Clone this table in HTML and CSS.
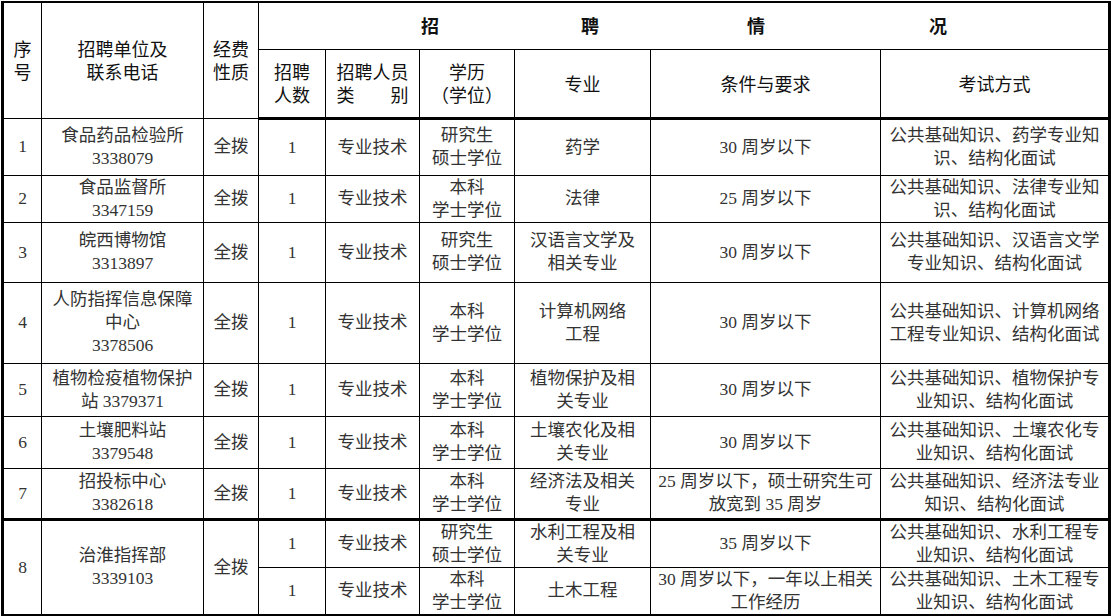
FILE: index.html
```html
<!DOCTYPE html>
<html lang="zh-CN">
<head>
<meta charset="utf-8">
<title>招聘情况</title>
<link rel="stylesheet" href="styles.css">
</head>
<body>
<table class="grid">
  <colgroup>
    <col class="c1"><col class="c2"><col class="c3"><col class="c4"><col class="c5"><col class="c6"><col class="c7"><col class="c8"><col class="c9">
  </colgroup>
  <thead>
    <tr class="hA">
      <th rowspan="2"><span class="ln">序</span><span class="ln">号</span></th>
      <th rowspan="2"><span class="ln">招聘单位及</span><span class="ln">联系电话</span></th>
      <th rowspan="2"><span class="ln">经费</span><span class="ln">性质</span></th>
      <th colspan="6" class="title"><div class="spread"><span>招</span><span>聘</span><span>情</span><span>况</span></div></th>
    </tr>
    <tr class="hB">
      <th><span class="ln">招聘</span><span class="ln">人数</span></th>
      <th><span class="ln">招聘人员</span><span class="ln">类&emsp;&emsp;别</span></th>
      <th><span class="ln">学历</span><span class="ln">（学位）</span></th>
      <th>专业</th>
      <th>条件与要求</th>
      <th>考试方式</th>
    </tr>
  </thead>
  <tbody>
    <tr class="r1">
      <td>1</td><td>食品药品检验所<br>3338079</td><td>全拨</td><td>1</td><td>专业技术</td><td>研究生<br>硕士学位</td><td>药学</td><td>30 周岁以下</td><td>公共基础知识、药学专业知<br>识、结构化面试</td>
    </tr>
    <tr class="r2">
      <td>2</td><td>食品监督所<br>3347159</td><td>全拨</td><td>1</td><td>专业技术</td><td>本科<br>学士学位</td><td>法律</td><td>25 周岁以下</td><td>公共基础知识、法律专业知<br>识、结构化面试</td>
    </tr>
    <tr class="r3">
      <td>3</td><td>皖西博物馆<br>3313897</td><td>全拨</td><td>1</td><td>专业技术</td><td>研究生<br>硕士学位</td><td>汉语言文学及<br>相关专业</td><td>30 周岁以下</td><td>公共基础知识、汉语言文学<br>专业知识、结构化面试</td>
    </tr>
    <tr class="r4">
      <td>4</td><td>人防指挥信息保障<br>中心<br>3378506</td><td>全拨</td><td>1</td><td>专业技术</td><td>本科<br>学士学位</td><td>计算机网络<br>工程</td><td>30 周岁以下</td><td>公共基础知识、计算机网络<br>工程专业知识、结构化面试</td>
    </tr>
    <tr class="r5">
      <td>5</td><td>植物检疫植物保护<br>站 3379371</td><td>全拨</td><td>1</td><td>专业技术</td><td>本科<br>学士学位</td><td>植物保护及相<br>关专业</td><td>30 周岁以下</td><td>公共基础知识、植物保护专<br>业知识、结构化面试</td>
    </tr>
    <tr class="r6">
      <td>6</td><td>土壤肥料站<br>3379548</td><td>全拨</td><td>1</td><td>专业技术</td><td>本科<br>学士学位</td><td>土壤农化及相<br>关专业</td><td>30 周岁以下</td><td>公共基础知识、土壤农化专<br>业知识、结构化面试</td>
    </tr>
    <tr class="r7">
      <td>7</td><td>招投标中心<br>3382618</td><td>全拨</td><td>1</td><td>专业技术</td><td>本科<br>学士学位</td><td>经济法及相关<br>专业</td><td>25 周岁以下，硕士研究生可<br>放宽到 35 周岁</td><td>公共基础知识、经济法专业<br>知识、结构化面试</td>
    </tr>
    <tr class="r8a">
      <td rowspan="2">8</td><td rowspan="2">治淮指挥部<br>3339103</td><td rowspan="2">全拨</td><td>1</td><td>专业技术</td><td>研究生<br>硕士学位</td><td>水利工程及相<br>关专业</td><td>35 周岁以下</td><td>公共基础知识、水利工程专<br>业知识、结构化面试</td>
    </tr>
    <tr class="r8b">
      <td>1</td><td>专业技术</td><td>本科<br>学士学位</td><td>土木工程</td><td>30 周岁以下，一年以上相关<br>工作经历</td><td>公共基础知识、土木工程专<br>业知识、结构化面试</td>
    </tr>
  </tbody>
</table>
</body>
</html>
```

FILE: styles.css
```css
html, body {
  margin: 0;
  padding: 0;
  background: #fff;
}

.grid {
  border-collapse: collapse;
  table-layout: fixed;
  width: 1107px;
  margin: 1px 0 0 1px;
  border-top: 2px solid #000;
  border-left: 3px solid #000;
  border-right: 3px solid #000;
  border-bottom: 2px solid #000;
}

.c1 { width: 39px; }
.c2 { width: 162px; }
.c3 { width: 55px; }
.c4 { width: 67px; }
.c5 { width: 94px; }
.c6 { width: 95px; }
.c7 { width: 136px; }
.c8 { width: 230px; }
.c9 { width: 229px; }

.grid th,
.grid td {
  border: 1px solid #000;
  padding: 0;
  text-align: center;
  vertical-align: middle;
  white-space: nowrap;
  overflow: hidden;
}

.grid th {
  font-family: "Noto Sans CJK SC", sans-serif;
  font-weight: 400;
  font-size: 18px;
  line-height: 23px;
  color: #111;
}

.ln {
  display: block;
  height: 23px;
  line-height: 23px;
}

.grid td {
  font-family: "Liberation Serif", "Noto Sans CJK SC", serif;
  font-weight: 400;
  font-size: 17.5px;
  line-height: 23px;
  color: #333;
}

.grid thead tr.hB th {
  border-bottom: 3px solid #000;
}

.title {
  font-weight: 700;
}

.grid th.title {
  font-weight: 700;
}

.spread {
  display: flex;
  padding-left: 162px;
}

.spread span:nth-child(1) { margin-right: 142px; }
.spread span:nth-child(2) { margin-right: 148px; }
.spread span:nth-child(3) { margin-right: 164px; }

.hA { height: 47px; }
.hB { height: 69px; }
.r1 { height: 57px; }
.r2 { height: 47px; }
.r3 { height: 60px; }
.r4 { height: 81px; }
.r5 { height: 53px; }
.r6 { height: 52px; }
.r7 { height: 51px; }
.r8a { height: 47px; }
.r8b { height: 47px; }

.grid tr.r7 td {
  border-bottom: 3px solid #000;
}
```
